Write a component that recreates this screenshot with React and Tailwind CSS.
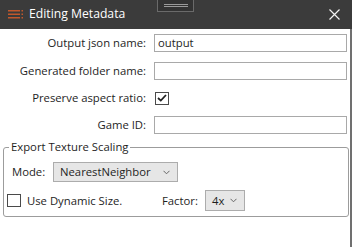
const font = { fontFamily: '"Open Sans", "Noto Sans", sans-serif' };

const Chevron = () => (
  <svg width="7" height="5" viewBox="0 0 7 5" className="shrink-0">
    <path d="M0.5 0.8 L3.5 3.8 L6.5 0.8" fill="none" stroke="#666" strokeWidth="1" />
  </svg>
);

const Field = ({ label, children, className = '' }) => (
  <div className={`flex items-center ${className}`}>
    <div className="w-[147px] text-right pr-[1px] text-[11.3px] text-[#1e1e1e] leading-none">{label}</div>
    <div className="ml-[7px] flex-1 flex items-center">{children}</div>
  </div>
);

const TextBox = ({ value = '' }) => (
  <div className="h-[18px] w-[193px] border border-[#a9a9a9] bg-white flex items-center px-[3px] text-[11.3px] text-[#1e1e1e] leading-none">
    {value}
  </div>
);

const Check = ({ checked }) => (
  <div className="w-[14px] h-[13px] border border-[#4a4a4a] bg-white flex items-center justify-center shrink-0">
    {checked && (
      <svg width="10" height="8" viewBox="0 0 10 8">
        <path d="M1 4 L3.8 6.6 L9 1" fill="none" stroke="#222" strokeWidth="1.8" />
      </svg>
    )}
  </div>
);

const Combo = ({ value, className }) => (
  <div className={`flex items-center justify-between border border-[#acacac] bg-[#e6e6e6] pl-[6px] pr-[7px] text-[11.3px] text-[#1e1e1e] leading-none ${className}`}>
    <span>{value}</span>
    <Chevron />
  </div>
);

export default function App() {
  return (
    <div className="w-[352px] h-[247px] bg-white overflow-hidden flex flex-col relative" style={font}>
      <div className="h-[29px] bg-[#3b3b3b] flex items-center shrink-0">
        <svg width="16" height="9" viewBox="0 0 16 9" className="ml-[8px]">
          <rect x="0" y="0" width="12" height="1.5" fill="#c2582c" />
          <rect x="0" y="3.5" width="12" height="1.5" fill="#c2582c" />
          <rect x="0" y="7" width="12" height="1.5" fill="#c2582c" />
          <rect x="13.5" y="0" width="1.5" height="1.5" fill="#c2582c" />
          <rect x="13.5" y="3.5" width="1.5" height="1.5" fill="#c2582c" />
          <rect x="13.5" y="7" width="1.5" height="1.5" fill="#c2582c" />
        </svg>
        <span className="ml-[5px] text-[12.2px] text-white leading-none">Editing Metadata</span>
        <svg width="11" height="11" viewBox="0 0 11 11" className="ml-auto mr-[12px]">
          <path d="M0.5 0.5 L10.5 10.5 M10.5 0.5 L0.5 10.5" stroke="#f2f2f2" strokeWidth="1.2" />
        </svg>
      </div>

      <div className="absolute left-[157px] top-0 w-[37px] h-[12px] border border-t-0 border-[#6a6a6a] bg-[#333333] flex flex-col items-center justify-center gap-[1px]">
        <div className="w-[24px] h-[1px] bg-[#9a9a9a]" />
        <div className="w-[24px] h-[1px] bg-[#9a9a9a]" />
      </div>

      <div className="flex-1 border-r-2 border-[#707070] flex flex-col">
        <Field label="Output json name:" className="mt-[5px]">
          <TextBox value="output" />
        </Field>
        <Field label="Generated folder name:" className="mt-[10px]">
          <TextBox />
        </Field>
        <Field label="Preserve aspect ratio:" className="mt-[9px] h-[18px]">
          <div className="ml-[1px]">
            <Check checked />
          </div>
        </Field>
        <Field label="Game ID:" className="mt-[9px]">
          <TextBox />
        </Field>

        <fieldset className="ml-[3px] mr-[1px] mt-[5px] border border-[#9c9c9c] rounded-[3px] pb-[5px] pl-[3px]">
          <legend className="ml-[2px] px-[2px] text-[11.3px] text-[#1e1e1e] leading-[16px]">Export Texture Scaling</legend>
          <div className="flex items-center mt-[7px] ml-[5px]">
            <span className="w-[41px] text-[11.3px] text-[#1e1e1e] leading-none">Mode:</span>
            <Combo value="NearestNeighbor" className="w-[125px] h-[20px]" />
          </div>
          <div className="flex items-center mt-[8px]">
            <div className="w-[155px] flex items-center">
              <Check />
              <span className="ml-[6px] text-[11.3px] text-[#1e1e1e] leading-none">Use Dynamic Size.</span>
            </div>
            <span className="w-[43px] text-[11.3px] text-[#1e1e1e] leading-none">Factor:</span>
            <Combo value="4x" className="w-[40px] h-[21px]" />
          </div>
        </fieldset>
      </div>
    </div>
  );
}
